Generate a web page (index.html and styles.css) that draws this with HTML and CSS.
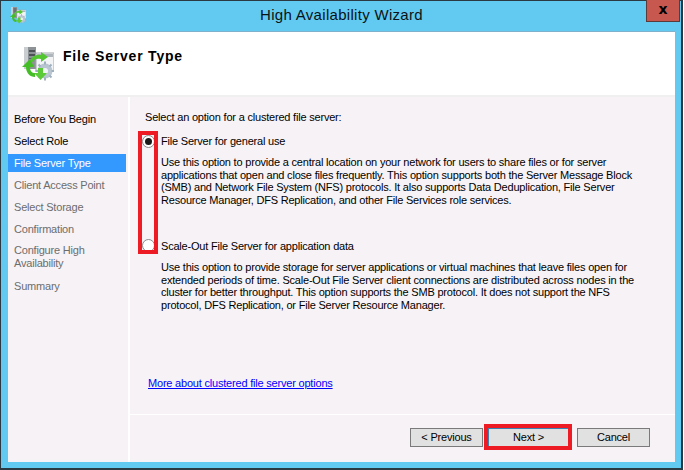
FILE: index.html
```html
<!DOCTYPE html>
<html lang="en">
<head>
<meta charset="utf-8">
<title>High Availability Wizard</title>
<link rel="stylesheet" href="styles.css">
</head>
<body>
<svg class="defs" width="0" height="0">
  <defs>
    <symbol id="role" viewBox="0 0 32 34">
      <rect x="2" y="0" width="12" height="22" fill="#8d9296"/>
      <rect x="2" y="0" width="4" height="22" fill="#c9cdd0"/>
      <rect x="7" y="3" width="6" height="2" fill="#4d5257"/>
      <rect x="7" y="7" width="6" height="2" fill="#4d5257"/>
      <rect x="7" y="11" width="6" height="1" fill="#5d6267"/>
      <rect x="14" y="6" width="18" height="18" fill="#f2f4f6" stroke="#a3a9ae" stroke-width="1"/>
      <rect x="15" y="7" width="16" height="3" fill="#aeb6bd"/>
      <circle cx="23" cy="24" r="7.500" fill="#b9c6d2"/>
      <circle cx="23" cy="24" r="3" fill="#f2f5f7"/>
      <path d="M23 14.500v3M23 30.500v3M13.500 24h3M29.500 24h2.500M16.500 17.500l2 2M27.500 28.500l2 2M29.500 17.500l-2 2M18.500 28.500l-2 2" stroke="#9fb0bf" stroke-width="2"/>
      <path d="M8 14 C10 9 14 7 19 8 L19 5 L26 10 L19 15 L19 12 C15 11 12 12 11 15Z" fill="#52c531"/>
      <path d="M8 12 L0 20 L4 20 C4 26 8 30 13 30 L13 26 C10 26 8 24 8 20 L12 20Z" fill="#45bd27"/>
      <path d="M16 21 L21 21 L21 26 L25 26 L18.500 33 L12 26 L16 26Z" fill="#5ccb38"/>
    </symbol>
  </defs>
</svg>
<div class="window">
  <header class="titlebar">
    <svg class="app-icon"><use href="#role"/></svg>
    <h1 class="title">High Availability Wizard</h1>
    <button class="close" aria-label="Close">x</button>
  </header>
  <div class="client">
    <div class="banner">
      <svg class="banner-icon"><use href="#role"/></svg>
      <h2 class="banner-title">File Server Type</h2>
    </div>
    <div class="body">
      <nav class="steps">
        <div class="step done">Before You Begin</div>
        <div class="step done">Select Role</div>
        <div class="step current">File Server Type</div>
        <div class="step">Client Access Point</div>
        <div class="step">Select Storage</div>
        <div class="step">Confirmation</div>
        <div class="step two">Configure High<br>Availability</div>
        <div class="step">Summary</div>
      </nav>
      <main class="main">
        <div class="content">
          <p class="intro">Select an option for a clustered file server:</p>
          <div class="option first">
            <span class="radio checked"></span>
            <span class="label">File Server for general use</span>
          </div>
          <p class="desc">Use this option to provide a central location on your network for users to share files or for server<br>applications that open and close files frequently. This option supports both the Server Message Block<br>(SMB) and Network File System (NFS) protocols. It also supports Data Deduplication, File Server<br>Resource Manager, DFS Replication, and other File Services role services.</p>
          <div class="option second">
            <span class="radio"></span>
            <span class="label">Scale-Out File Server for application data</span>
          </div>
          <p class="desc">Use this option to provide storage for server applications or virtual machines that leave files open for<br>extended periods of time. Scale-Out File Server client connections are distributed across nodes in the<br>cluster for better throughput. This option supports the SMB protocol. It does not support the NFS<br>protocol, DFS Replication, or File Server Resource Manager.</p>
          <a class="more" href="#">More about clustered file server options</a>
        </div>
        <footer class="actions">
          <button class="btn">&lt; Previous</button>
          <button class="btn next">Next &gt;</button>
          <button class="btn cancel">Cancel</button>
        </footer>
      </main>
    </div>
  </div>
</div>
<div class="callout callout-radios"></div>
<div class="callout callout-next"></div>
</body>
</html>
```
FILE: styles.css
```css
* { box-sizing: border-box; }
html, body { margin: 0; padding: 0; }
body {
  width: 684px;
  height: 470px;
  position: relative;
  overflow: hidden;
  background: #fff;
  font-family: "Liberation Sans", Arial, sans-serif;
  font-size: 11px;
  letter-spacing: -0.2px;
  color: #000;
}
.defs { position: absolute; }
.window {
  width: 683px;
  height: 470px;
  background: #62caf0;
  border: 1px solid #2b3a42;
  border-bottom-width: 2px;
  border-right-width: 2px;
  display: flex;
  flex-direction: column;
  padding: 0 6px 6px 7px;
}
.titlebar {
  height: 30px;
  flex: none;
  display: flex;
  align-items: flex-start;
  position: relative;
}
.app-icon { width: 16px; height: 17px; margin: 6px 0 0 2px; }
.title {
  position: absolute;
  left: 0;
  right: 0;
  top: 6px;
  margin: 0;
  text-align: center;
  font-size: 15px;
  line-height: 16px;
  font-weight: 400;
  letter-spacing: 0.3px;
  color: #0c1216;
}
.close {
  margin: -1px -5px 0 auto;
  width: 34px;
  height: 22px;
  padding: 0 0 3px;
  background: #c75850;
  border: 1px solid #5c3a3a;
  border-top: 0;
  font: 700 14px/1 "DejaVu Sans", sans-serif;
  color: #000;
}
.client {
  flex: 1;
  display: flex;
  flex-direction: column;
  border-top: 1px solid #7fb0cc;
  background: #fff;
}
.banner {
  height: 65px;
  flex: none;
  display: flex;
  align-items: flex-start;
  border-bottom: 2px solid #f0f0f0;
  background: #fff;
  padding: 15px 0 0 14px;
}
.banner-icon { width: 32px; height: 34px; }
.banner-title {
  margin: 1px 0 0 9px;
  font-size: 14px;
  line-height: 16px;
  letter-spacing: 0.8px;
  font-weight: 700;
}
.body { flex: 1; display: flex; min-height: 0; }
.steps {
  width: 120px;
  flex: none;
  background: #f6f2f6;
  padding-top: 13px;
  margin-right: 2px;
}
.step {
  height: 18px;
  margin: 0 2px 4px 0;
  padding-left: 6px;
  line-height: 18px;
  color: #6d6d6d;
  white-space: nowrap;
}
.step.done { color: #000; }
.step.current { background: #3399ff; color: #fff; }
.step.two { height: 31px; line-height: 13px; padding-top: 2px; margin-bottom: 4px; }
.main { flex: 1; display: flex; flex-direction: column; min-width: 0; background: #f6f2f6; }
.content {
  height: 318px;
  flex: none;
  padding: 14px 0 0 15px;
  border-bottom: 1px solid #fff;
}
.intro { margin: 0; line-height: 13px; }
.option { display: flex; align-items: center; height: 14px; margin-left: -3px; }
.option.first { margin-top: 10px; }
.option.second { margin-top: 32px; }
.radio {
  width: 13px;
  height: 13px;
  flex: none;
  border-radius: 50%;
  background: #fff;
  border: 1px solid #8a8a8a;
  margin-right: 6px;
  display: flex;
  align-items: center;
  justify-content: center;
}
.radio.checked::after {
  content: "";
  width: 7px;
  height: 7px;
  border-radius: 50%;
  background: #1a1a1a;
}
.label { white-space: nowrap; }
.desc {
  margin: 8px 0 0 16px;
  line-height: 12.700px;
  white-space: nowrap;
}
.more {
  display: block;
  margin: 65px 0 0 3px;
  color: #0000ff;
  line-height: 13px;
}
.actions {
  flex: 1;
  display: flex;
  align-items: flex-start;
  padding: 13px 0 0 280px;
  gap: 5px;
}
.btn {
  width: 73px;
  height: 19px;
  padding: 0;
  background: #e1e1e1;
  border: 1px solid #7a7a7a;
  font: 11px/1 "Liberation Sans", Arial, sans-serif;
  letter-spacing: -0.2px;
  color: #000;
}
.btn.next { width: 81px; border-color: #3c7fb1; }
.btn.cancel { margin-left: 3px; }
.callout { position: absolute; border: 4px solid #ed1c24; }
.callout-radios { left: 138px; top: 131px; width: 20px; height: 123px; }
.callout-next { left: 484px; top: 424px; width: 88px; height: 26px; }
```
